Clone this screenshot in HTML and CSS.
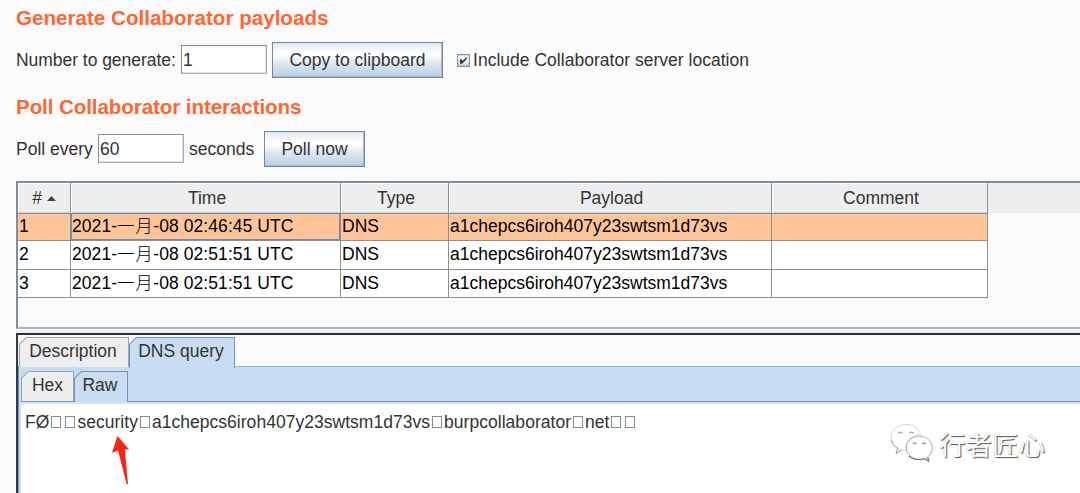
FILE: index.html
```
<!DOCTYPE html>
<html lang="en">
<head>
<meta charset="utf-8">
<title>Collaborator client</title>
<link rel="stylesheet" href="styles.css">
</head>
<body>
<main class="window">
  <section class="controls">
    <h2 class="heading">Generate Collaborator payloads</h2>
    <div class="row">
      <span class="label-number">Number to generate:</span>
      <div class="field">1</div>
      <div class="button button-copy">Copy to clipboard</div>
      <svg class="checkbox" viewBox="0 0 13 13">
        <defs><linearGradient id="box" x1="0" y1="0" x2="0" y2="1"><stop offset="0" stop-color="#e4edf6"/><stop offset=".4" stop-color="#fff"/><stop offset="1" stop-color="#b8cfe5"/></linearGradient></defs>
        <rect x=".6" y=".6" width="11.8" height="11.8" fill="url(#box)" stroke="#8495a8" stroke-width="1.2"/>
        <path d="M3 5.2h2v2L9.9 3v2L5 9.8H3z" fill="#2d3238"/>
      </svg>
      <span class="label-include">Include Collaborator server location</span>
    </div>
    <h2 class="heading heading-poll">Poll Collaborator interactions</h2>
    <div class="row">
      <span class="label-poll">Poll every</span>
      <div class="field">60</div>
      <span class="label-seconds">seconds</span>
      <div class="button button-poll">Poll now</div>
    </div>
  </section>

  <section class="table-pane">
    <div class="header-strip">
      <div class="grid header">
        <div class="th th-index"># <svg class="sort" viewBox="0 0 9 5"><path d="M0 5L4.500 0 9 5z" fill="#2f4558"/></svg></div>
        <div class="th">Time</div><div class="th">Type</div><div class="th">Payload</div><div class="th">Comment</div>
      </div>
    </div>
    <div class="grid record selected">
      <div class="td">1</div><div class="td time focused">2021-<span class="cjk">一月</span>-08 02:46:45 UTC</div><div class="td">DNS</div><div class="td">a1chepcs6iroh407y23swtsm1d73vs</div><div class="td"></div>
    </div>
    <div class="grid record tall">
      <div class="td">2</div><div class="td time">2021-<span class="cjk">一月</span>-08 02:51:51 UTC</div><div class="td">DNS</div><div class="td">a1chepcs6iroh407y23swtsm1d73vs</div><div class="td"></div>
    </div>
    <div class="grid record">
      <div class="td">3</div><div class="td time">2021-<span class="cjk">一月</span>-08 02:51:51 UTC</div><div class="td">DNS</div><div class="td">a1chepcs6iroh407y23swtsm1d73vs</div><div class="td"></div>
    </div>
  </section>

  <div class="divider"></div>

  <section class="detail">
    <div class="tabs outer-tabs">
      <div class="tab tab-description"><span>Description</span></div>
      <div class="tab tab-dns active"><span>DNS query</span></div>
    </div>
    <div class="detail-body">
      <div class="tabs inner-tabs">
        <div class="tab tab-hex"><span>Hex</span></div>
        <div class="tab tab-raw active"><span>Raw</span></div>
      </div>
      <div class="raw">FØ<i class="ctl"></i><i class="ctl"></i>security<i class="ctl"></i>a1chepcs6iroh407y23swtsm1d73vs<i class="ctl"></i>burpcollaborator<i class="ctl"></i>net<i class="ctl"></i><i class="ctl"></i></div>
    </div>
  </section>

  <svg class="arrow" viewBox="0 0 20 50"><path d="M6.500 1L18.200 14.400l-4.400-.2L17 49l-1.300.2L7 15.600 1 17.700z" fill="#ff2113"/></svg>

  <div class="watermark">
    <svg class="wechat" viewBox="0 0 46 42">
      <g fill="#fff" stroke-linejoin="round">
        <path stroke="#d2d2d2" stroke-width=".9" d="M7 31.500l1.600-5.300C4.400 23.700 2 19.800 2 15.500 2 8.300 8.600 2.500 17 2.500c7.200 0 13.200 4.200 14.700 10.200C23.500 13 17 18.400 17 25.200c0 1.200.2 2.300.6 3.400-1.700.1-3.500-.1-5-.5z"/>
        <path fill="none" stroke="#929292" stroke-width=".9" d="M2.300 18c.8 3.400 3 6.200 6.300 8.200L7 31.500l5.600-3.400"/>
        <path stroke="#a8a8a8" stroke-width="1" d="M17.300 25.800c0-6.500 5.700-11.600 13-11.600s13 5.200 13 11.600c0 3.800-1.800 7-4.700 9.200l1.400 4.200-4.700-2.500c-1.600.5-3.200.8-5 .8-7.300 0-13-5.200-13-11.700z"/>
        <path fill="none" stroke="#777" stroke-width="1.100" d="M20 34c2.500 2.300 6.200 3.500 10 3.500 1.900 0 3.500-.3 5.200-.8l4.700 2.500-1.300-4.200"/>
      </g>
      <g fill="none" stroke="#858585" stroke-width="1.100"><path d="M9.500 11.500q2-3 4 0M20.500 11.500q2-3 4 0M24 22.300q1.800-2.800 3.600 0M33.200 22.300q1.800-2.800 3.600 0"/></g>
    </svg>
    <span class="watermark-name">行者匠心</span>
  </div>
</main>
</body>
</html>
```
FILE: styles.css
```
* { box-sizing: border-box; }

body {
  margin: 0;
  background: #fbfbfb;
  color: #333;
  font: 17.5px/20px "Liberation Sans", Arial, "Noto Sans CJK SC", sans-serif;
}

.window {
  position: relative;
  display: flex;
  flex-direction: column;
  height: 493px;
  padding-left: 16px;
  overflow: hidden;
  white-space: nowrap;
}

/* Payload and polling controls */
.controls { height: 181px; padding-top: 6px; }
.heading {
  margin: 0;
  height: 24px;
  font-size: 20.600px;
  line-height: 24px;
  font-weight: bold;
  color: #ff6633;
}
.heading-poll { letter-spacing: -.1px; }
.row {
  display: flex;
  align-items: center;
  height: 35px;
  margin: 12px 0 18px;
}
.label-number { width: 165px; letter-spacing: -.04px; }
.label-poll { width: 82px; }
.label-seconds { width: 75px; margin-left: 5px; }
.label-include { letter-spacing: .02px; }
.field {
  width: 86px;
  height: 29px;
  padding: 4px 1px;
  background: #fff;
  border: 1px solid #7f8fa3;
  border-right-color: #9fadbd;
  border-bottom-color: #a9b6c4;
  box-shadow: inset -1px -1px #d9e0e8;
}
.button {
  height: 36px;
  border: 1px solid #76879b;
  box-shadow: inset -1px -1px #a9b9ca;
  background: linear-gradient(#dde8f3, #fff 30%, #fff 36%, #dce8f3 60%, #b8cfe5);
  text-align: center;
  line-height: 34px;
}
.button-copy { width: 171px; margin-left: 5px; }
.button-poll { width: 101px; }
.checkbox { width: 13px; height: 13px; margin: 1px 3px 0 14px; }

/* Interactions table */
.table-pane {
  height: 148px;
  border: 2px solid #7d8e9f;
  border-right: 0;
  border-bottom-color: #a9b6c1;
}
.header-strip { height: 30px; background: #eee; }
.grid { display: grid; grid-template-columns: 53px 270px 108px 323px 216px; width: 970px; }
.header { height: 30px; text-align: center; line-height: 30px; }
.th { padding-left: 3px; border-right: 1px solid #8292a2; border-bottom: 1px solid #8292a2; box-shadow: inset 1px 1px #fff, inset 0 -1px #c5cdd5; }
.th-index { padding-left: 0; }
.sort { width: 9px; height: 5px; vertical-align: 3px; }
.record { height: 28px; background: #fff; color: #000; line-height: 27px; }
.record.tall { height: 29px; }
.record.selected { background: #ffc599; }
.td { height: 100%; padding-left: 1px; border-right: 1px solid #8292a2; border-bottom: 1px solid #8292a2; }
.time { letter-spacing: .07px; }
.focused { box-shadow: inset 1px 1px #6f86ac, inset -1px -1px #7288ad; }
.cjk { font-family: "Noto Sans CJK SC", sans-serif; font-weight: 300; line-height: 1; letter-spacing: .6px; }

.divider { height: 4px; border-top: 1px solid #fff; background: #eee; }

/* Message viewer */
.detail {
  flex: 1;
  border-top: 2px solid #171d27;
  border-left: 2px solid #303a47;
  border-top-color: #29303a;
}
.tabs { display: flex; }
.outer-tabs { height: 31px; padding: 2px 0 0 1px; }
.tab {
  position: relative;
  height: 30px;
  background: #95a2af;
  clip-path: polygon(0 7px, 7px 0, 100% 0, 100% 100%, 0 100%);
  text-align: center;
  line-height: 28px;
}
.tab::before {
  content: "";
  position: absolute;
  inset: 1px 1px 0;
  background: #eee;
  clip-path: polygon(0 6.500px, 6.500px 0, 100% 0, 100% 100%, 0 100%);
}
.tab span { position: relative; }
.tab.active { background: #7890c8; z-index: 1; }
.tab.active::before { background: #c8ddf2; }
.tab-description { width: 110px; padding-right: 2px; }
.tab-dns { width: 106px; height: 31px; padding-right: 2px; }
.detail-body {
  height: 127px;
  padding-left: 2px;
  border-top: 1px solid #9aafd6;
  border-left: 1px solid #6f8fc9;
  background: #c8ddf2;
}
.inner-tabs { height: 34px; padding-top: 4px; }
.tab-hex { width: 53px; }
.tab-raw { width: 54px; height: 31px; padding-right: 2px; }
.raw {
  height: 93px;
  padding: 10px 4px;
  border-top: 1px solid #7890c8;
  background: #fff;
  box-shadow: inset 0 2px #d5e1f5;
  line-height: 20px;
  letter-spacing: .03px;
}
.ctl {
  display: inline-block;
  width: 10px;
  height: 12px;
  margin: 0 2px;
  border: 1px solid #829090;
}

/* Annotations over the viewer */
.arrow { position: absolute; left: 111px; top: 435px; width: 20px; height: 50px; }
.watermark { position: absolute; left: 889px; top: 422px; display: flex; align-items: center; }
.wechat { width: 46px; height: 42px; }
.watermark-name {
  margin: 1px 0 0 4px;
  color: #fff;
  font: 26.500px/40px "Noto Sans CJK SC", sans-serif;
  text-shadow: 1px 1px 1px #555, 0 0 1px #aaa;
}
```
